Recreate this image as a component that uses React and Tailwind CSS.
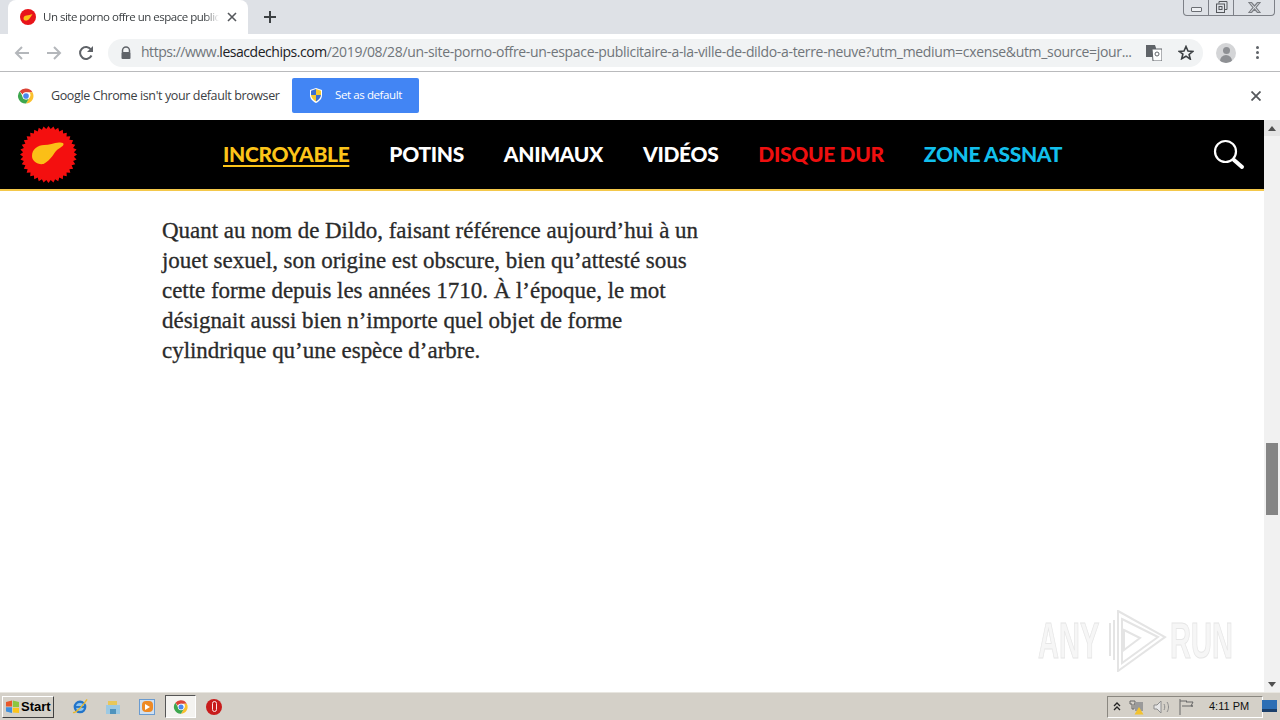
import React from "react";

const Seal = () => {
  const pts = [];
  const n = 36;
  for (let i = 0; i < n * 2; i++) {
    const r = i % 2 ? 25.5 : 28.5;
    const a = (Math.PI * i) / n;
    pts.push(`${28.5 + r * Math.cos(a)},${28.5 + r * Math.sin(a)}`);
  }
  return (
    <svg width="57" height="57" viewBox="0 0 57 57">
      <polygon points={pts.join(" ")} fill="#f40f0f" />
      <path d="M12 30c0-7 6-11 12-11 5 0 10-2 15-2.500 3-.3 5 .5 4.500 2-.5 2-4 3.500-7 6-3 3-5 9-13 13.500-6 1-11.500-3-11.500-8z" fill="#fbbf17" />
    </svg>
  );
};

const Favicon = () => (
  <svg width="16" height="16" viewBox="0 0 16 16">
    <circle cx="8" cy="8" r="8" fill="#e8141a" />
    <path d="M3.500 9.500c0-2 1.500-3 3-3 2 0 4-1 6-1.500-1 2-2 3-3 4.500-1 1.500-2.500 2-3.500 2-1.500 0-2.500-.5-2.500-2z" fill="#fbbf17" />
  </svg>
);

const ChromeLogo = ({ size = 18 }) => (
  <svg width={size} height={size} viewBox="0 0 48 48">
    <path d="M24 4a20 20 0 0 1 17.300 10H24a10 10 0 0 0-9.300 6.300L7.200 11.500A20 20 0 0 1 24 4z" fill="#db4437" />
    <path d="M41.300 14A20 20 0 0 1 24 44l8.700-15a10 10 0 0 0-.1-15z" fill="#fbc02d" />
    <path d="M24 44A20 20 0 0 1 7.200 11.500l8.600 15A10 10 0 0 0 32.700 29L24 44z" fill="#3da74e" />
    <circle cx="24" cy="24" r="9.500" fill="#fff" />
    <circle cx="24" cy="24" r="7.500" fill="#4a87ee" />
  </svg>
);

const Shield = () => (
  <svg width="16" height="17" viewBox="0 0 16 17">
    <path d="M8 1l6 2v5c0 4-3 6.500-6 8-3-1.500-6-4-6-8V3z" fill="#fff" />
    <path d="M8 2v6H3V3.700z" fill="#3b6fd1" />
    <path d="M8 8h5c-.2 3-2.500 5-5 6.500z" fill="#3b6fd1" />
    <path d="M8 2l5 1.700V8H8zM3 8h5v6.500C5.500 13 3.200 11 3 8z" fill="#f5c92e" />
  </svg>
);

const Nav = ({ children, className }) => (
  <a className={`font-['Lato','Liberation_Sans',sans-serif] text-[21px] leading-[26px] font-black tracking-[-0.35px] ${className}`}>
    {children}
  </a>
);

const Btn = ({ children }) => <div className="w-8 flex items-center justify-center">{children}</div>;

export default function App() {
  return (
    <div className="w-[1280px] h-[720px] overflow-hidden flex flex-col bg-white font-['Open_Sans','Liberation_Sans',sans-serif]">
      {/* Tab strip */}
      <div className="h-[34px] bg-[#dee1e6] flex items-end relative shrink-0">
        <div className="ml-2 w-[240px] h-[34px] bg-white rounded-t-lg flex items-center pl-3 pr-2">
          <Favicon />
          <span className="ml-[7px] text-[11.500px] text-[#3c4043] w-[176px] whitespace-nowrap tracking-[-0.5px] [mask-image:linear-gradient(to_right,#000_92%,transparent)]">
            Un site porno offre un espace public
          </span>
          <svg className="ml-[8px]" width="10" height="10" viewBox="0 0 10 10"><path d="M1 1l8 8M9 1l-8 8" stroke="#55585c" strokeWidth="1.600" /></svg>
        </div>
        <svg className="ml-[16px] mb-[11px]" width="12" height="12" viewBox="0 0 12 12"><path d="M6 0v12M0 6h12" stroke="#3c4043" strokeWidth="2" /></svg>
        <div className="absolute right-[5px] top-0 w-[92px] h-[16px] border border-t-0 border-[#7d8087] rounded-b-[4px] flex">
          <div className="w-[25px] flex items-center justify-center border-r border-[#7d8087]"><div className="w-[11px] h-[5px] mt-[4px] border border-[#6b6e73] rounded-[1px] bg-[#eef0f3]" /></div>
          <div className="w-[25px] flex items-center justify-center border-r border-[#7d8087]">
            <svg width="13" height="13" viewBox="0 0 13 13" fill="none" stroke="#55585c"><path d="M4 2.500V.5h8v8h-2" /><rect x="1.500" y="3" width="8" height="8.500" /><rect x="4" y="5.500" width="3" height="3" /></svg>
          </div>
          <div className="flex-1 flex items-center justify-center">
            <svg width="13" height="11" viewBox="0 0 13 11" fill="none" stroke="#7b7e83" strokeWidth="1.200"><path d="M1 .5h2.500L6.500 4l3-3.500H12L8 5.500l4 5H9.500l-3-3.500-3 3.500H1l4-5z" /></svg>
          </div>
        </div>
      </div>

      {/* Toolbar */}
      <div className="h-[38px] bg-white border-b border-[#b9babc] flex items-center shrink-0 pl-[6px]">
        <Btn><svg width="16" height="14" viewBox="0 0 16 14" fill="none" stroke="#b4b7bb" strokeWidth="2"><path d="M15 7H2M8 1L2 7l6 6" /></svg></Btn>
        <Btn><svg width="16" height="14" viewBox="0 0 16 14" fill="none" stroke="#b4b7bb" strokeWidth="2"><path d="M1 7h13M8 1l6 6-6 6" /></svg></Btn>
        <Btn><svg width="16" height="16" viewBox="0 0 16 16" fill="none"><path d="M13.500 10.500A6 6 0 1 1 13 4.500" stroke="#5f6368" strokeWidth="2" /><path d="M15 1v6H9z" fill="#5f6368" /></svg></Btn>
        <div className="ml-[6px] w-[1095px] h-[28px] bg-[#f1f3f4] rounded-full flex items-center pl-3 pr-[9px]">
          <svg width="12" height="14" viewBox="0 0 12 14"><path d="M2.500 6V4.500a3.500 3.500 0 0 1 7 0V6" fill="none" stroke="#5f6368" strokeWidth="1.500" /><rect x="1.500" y="6" width="9" height="7" rx="1" fill="#5f6368" /></svg>
          <div className="ml-[3px] w-[998px] pl-[6px] pb-[2px] whitespace-nowrap text-[14px] tracking-[-0.33px] text-[#70757a]">
            <span className="tracking-[-0.47px]">https://www.</span><span className="text-[#202124] tracking-[-0.47px]">lesacdechips.com</span>/2019/08/28/un-site-porno-offre-un-espace-publicitaire-a-la-ville-de-dildo-a-terre-neuve?utm_medium=cxense&amp;utm_source=jour...
          </div>
          <div className="flex-1" />
          <svg width="16" height="16" viewBox="0 0 16 16"><path d="M0 0h9l1 3v9H0z" fill="#5f6368" /><path d="M6 4h10v12H7z" fill="#fff" stroke="#5f6368" /><circle cx="11" cy="9" r="2" fill="none" stroke="#5f6368" /></svg>
          <svg className="ml-[16px]" width="16" height="15" viewBox="0 0 16 15"><path d="M8 1.500l2 4.500 4.800.4-3.700 3.100 1.200 4.700L8 11.200l-4.300 2.500 1.200-4.700L1.200 6.400 6 6z" fill="none" stroke="#3c4043" strokeWidth="1.600" /></svg>
        </div>
        <div className="ml-[13px] w-5 h-5 rounded-full bg-[#d4d5d7] relative overflow-hidden flex flex-col items-center">
          <div className="w-[7px] h-[7px] mt-1 rounded-full bg-[#8e9094]" />
          <div className="w-3 h-2 mt-[1px] rounded-t-full bg-[#8e9094]" />
        </div>
        <div className="ml-[20px] flex flex-col gap-[2px]">
          <div className="w-[3px] h-[3px] rounded-full bg-[#5f6368]" />
          <div className="w-[3px] h-[3px] rounded-full bg-[#5f6368]" />
          <div className="w-[3px] h-[3px] rounded-full bg-[#5f6368]" />
        </div>
      </div>

      {/* Infobar */}
      <div className="h-[48px] bg-white flex items-center shrink-0 pl-[17px]">
        <ChromeLogo />
        <span className="ml-[16px] w-[229px] whitespace-nowrap text-[12.500px] text-[#3c4043] tracking-[-0.38px]">Google Chrome isn't your default browser</span>
        <div className="ml-[12px] w-[127px] h-[35px] bg-[#4285f4] rounded-[2px] flex items-center pl-[16px] mb-[1px]">
          <Shield />
          <span className="ml-[11px] text-[11.500px] text-white tracking-[-0.4px] pb-[1px]">Set as default</span>
        </div>
        <div className="flex-1" />
        <svg className="mr-[19px]" width="10" height="10" viewBox="0 0 10 10"><path d="M.5.5l9 9M9.500.5l-9 9" stroke="#55585c" strokeWidth="1.800" /></svg>
      </div>

      {/* Viewport */}
      <div className="flex-1 flex min-h-0">
        <div className="flex-1 flex flex-col min-w-0 relative">
          <div className="h-[71px] bg-black border-b-[2px] border-[#f4c84a] flex items-center shrink-0 pl-[20px] pr-[19px]">
            <Seal />
            <div className="ml-[146px] flex items-center gap-[40px] h-full pb-[1px]">
              <Nav className="text-[#fcc419] underline decoration-2 underline-offset-[3px]">INCROYABLE</Nav>
              <Nav className="text-white">POTINS</Nav>
              <Nav className="text-white">ANIMAUX</Nav>
              <Nav className="text-white">VIDÉOS</Nav>
              <Nav className="text-[#ee0f0f]">DISQUE DUR</Nav>
              <Nav className="text-[#12bfec]">ZONE ASSNAT</Nav>
            </div>
            <div className="flex-1" />
            <svg width="32" height="32" viewBox="0 0 32 32" fill="none" stroke="#fff"><circle cx="12.500" cy="12.500" r="10.500" strokeWidth="2.200" /><path d="M21 21L29 28" strokeWidth="4" strokeLinecap="round" /></svg>
          </div>
          <div className="pl-[162px] pt-[25px] w-[720px] whitespace-nowrap text-[23px] leading-[30px] text-[#2a2a2a] tracking-[-0.03px] font-['Liberation_Serif','DejaVu_Serif',serif] [-webkit-text-stroke:0.3px_#2a2a2a]">
            <p>Quant au nom de Dildo, faisant référence aujourd’hui à un</p>
            <p>jouet sexuel, son origine est obscure, bien qu’attesté sous</p>
            <p>cette forme depuis les années 1710. À l’époque, le mot</p>
            <p>désignait aussi bien n’importe quel objet de forme</p>
            <p>cylindrique qu’une espèce d’arbre.</p>
          </div>
          <div className="absolute left-[1038px] top-[489px] h-[64px] w-[200px] flex items-center text-[#f6f6f6] text-[50px] leading-none font-bold font-['Liberation_Sans',sans-serif] [-webkit-text-stroke:1px_#e6e6e6]">
            <span className="scale-x-[0.58] origin-left w-[70px] shrink-0 whitespace-nowrap">ANY</span>
            <svg className="shrink-0" width="60" height="62" viewBox="0 0 60 62" fill="none" stroke="#e4e4e4" strokeWidth="2"><path d="M10 1l47 26-47 34z" /><path d="M14 9l36 18-36 26zM16 20l16 8-16 12z" /><path d="M2 13v33M6 10v40" /></svg>
            <span className="scale-x-[0.58] origin-left ml-[2px] w-[64px] shrink-0 whitespace-nowrap">RUN</span>
          </div>
        </div>
        <div className="w-4 bg-[#f1f1f1] flex flex-col items-center shrink-0 relative">
          <div className="h-[16px] w-full flex items-center justify-center bg-[#e4e4e4]"><div className="border-x-[4px] border-x-transparent border-b-[5px] border-b-[#505050]" /></div>
          <div className="h-[307px]" />
          <div className="w-[12px] h-[72px] bg-[#858585]" />
          <div className="flex-1" />
          <div className="h-[16px] flex items-center justify-center"><div className="border-x-[4px] border-x-transparent border-t-[5px] border-t-[#505050]" /></div>
        </div>
      </div>

      {/* Taskbar */}
      <div className="h-[28px] bg-[#d4d0c8] border-t border-[#e8e6e0] flex items-center shrink-0 pl-[2px] font-['Liberation_Sans',sans-serif]">
        <div className="w-[52px] h-[22px] bg-[#d4d0c8] border border-[#fff] border-r-[#404040] border-b-[#404040] flex items-center pl-[2px] gap-[1px] text-[13px] font-bold text-black">
          <svg width="15" height="14" viewBox="0 0 15 14"><path d="M1 2l6-1.500V6.500H1z" fill="#e8582a" /><path d="M7.800.5L14 2v5H7.800z" fill="#8cc63f" /><path d="M1 7.300h6V13l-6-1.500z" fill="#3f8fdd" /><path d="M7.800 7.800H14V13l-6.200-.5z" fill="#fcc419" /></svg>
          Start
        </div>
        <div className="ml-[18px] w-4 flex justify-center">
          <svg width="17" height="17" viewBox="0 0 17 17"><circle cx="8.500" cy="9" r="5.500" fill="#8fc6f2" stroke="#2274c9" strokeWidth="2.500" /><path d="M4 9h9" stroke="#2274c9" strokeWidth="2" /><path d="M1 15C5 15 12 7 16 1" stroke="#e8b830" strokeWidth="1.500" fill="none" /></svg>
        </div>
        <div className="ml-[17px]">
          <svg width="16" height="16" viewBox="0 0 16 16"><path d="M3 2h9v6H3z" fill="#e8c75a" /><path d="M1 6h14v9H1z" fill="#9cc9e3" /><path d="M5 15v-5h6v5" fill="#4f93bd" /></svg>
        </div>
        <div className="ml-[18px] w-4 h-4 bg-[#cfe0f2] border border-[#6a9bd0] flex items-center justify-center">
          <div className="w-[11px] h-[11px] rounded-sm bg-[#ee8a25] flex items-center justify-center"><div className="border-y-[3px] border-y-transparent border-l-[5px] border-l-white" /></div>
        </div>
        <div className="ml-[10px] w-[31px] h-[23px] bg-[#f4f3f0] border border-[#555] border-r-[#fff] border-b-[#fff] flex items-center justify-center">
          <ChromeLogo size={16} />
        </div>
        <div className="ml-[10px] w-4 h-4 rounded-full bg-[#c81c1c] flex items-center justify-center">
          <div className="w-[5px] h-[11px] rounded-full border-[1.500px] border-[#fbe5e5]" />
        </div>
        <div className="flex-1" />
        <div className="w-[156px] h-[22px] border border-[#8a8780] border-r-[#fff] border-b-[#fff] flex items-center mr-[17px] pl-[5px] relative text-[11px] text-black">
          <svg width="8" height="9" viewBox="0 0 8 9" fill="none" stroke="#222" strokeWidth="1.300"><path d="M1 4l3-3 3 3M1 8l3-3 3 3" /></svg>
          <svg className="ml-[8px]" width="16" height="16" viewBox="0 0 16 16"><path d="M1 2h5v3H5v5H3V5H1z" fill="none" stroke="#666" /><rect x="6" y="3" width="8" height="9" fill="#9a9a9a" /><path d="M10 8l4.500 7.500h-9z" fill="#f2c230" /></svg>
          <svg className="ml-[8px]" width="18" height="16" viewBox="0 0 18 16" fill="none" stroke="#8d8d8d"><path d="M1 6h3l4-4v12l-4-4H1z" fill="#e6e6e6" /><path d="M11 5c1 2 1 4 0 6M14 3c2 3 2 7 0 10" /></svg>
          <svg className="ml-[7px]" width="17" height="16" viewBox="0 0 17 16" fill="none" stroke="#666"><path d="M2 0v16M2 2h7l-1 1h7l-2 4 2 0H4" /></svg>
          <span className="absolute left-[101px] text-[#111]">4:11 PM</span>
          <div className="absolute right-[-15px] top-[3px] w-[15px] h-[12px] bg-[#2d6fb5] border-b-[3px] border-[#1a3f6b]" />
        </div>
      </div>
    </div>
  );
}
